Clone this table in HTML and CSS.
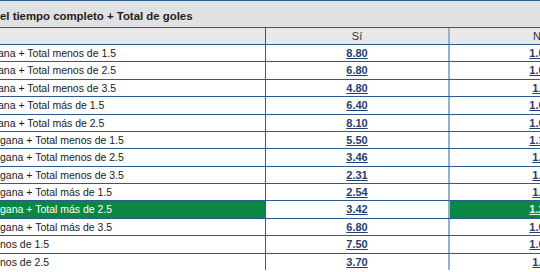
FILE: index.html
```html
<!DOCTYPE html>
<html>
<head>
<meta charset="utf-8">
<link rel="stylesheet" href="styles.css">
</head>
<body>
<div class="market">
  <div class="title">el tiempo completo + Total de goles</div>
  <div class="row head">
    <div class="c name"></div>
    <div class="c odd">Sí</div>
    <div class="c odd last">No</div>
  </div>
  <div class="row"><div class="c name a">ana + Total menos de 1.5</div><div class="c odd"><a>8.80</a></div><div class="c odd last"><a>1.01</a></div></div>
  <div class="row"><div class="c name a">ana + Total menos de 2.5</div><div class="c odd"><a>6.80</a></div><div class="c odd last"><a>1.05</a></div></div>
  <div class="row"><div class="c name a">ana + Total menos de 3.5</div><div class="c odd"><a>4.80</a></div><div class="c odd last"><a>1.1</a></div></div>
  <div class="row"><div class="c name a">ana + Total más de 1.5</div><div class="c odd"><a>6.40</a></div><div class="c odd last"><a>1.05</a></div></div>
  <div class="row"><div class="c name a">ana + Total más de 2.5</div><div class="c odd"><a>8.10</a></div><div class="c odd last"><a>1.02</a></div></div>
  <div class="row"><div class="c name">gana + Total menos de 1.5</div><div class="c odd"><a>5.50</a></div><div class="c odd last"><a>1.12</a></div></div>
  <div class="row"><div class="c name">gana + Total menos de 2.5</div><div class="c odd"><a>3.46</a></div><div class="c odd last"><a>1.2</a></div></div>
  <div class="row"><div class="c name">gana + Total menos de 3.5</div><div class="c odd"><a>2.31</a></div><div class="c odd last"><a>1.4</a></div></div>
  <div class="row"><div class="c name">gana + Total más de 1.5</div><div class="c odd"><a>2.54</a></div><div class="c odd last"><a>1.4</a></div></div>
  <div class="row sel"><div class="c name on">gana + Total más de 2.5</div><div class="c odd"><a>3.42</a></div><div class="c odd last on"><a>1.25</a></div></div>
  <div class="row"><div class="c name">gana + Total más de 3.5</div><div class="c odd"><a>6.80</a></div><div class="c odd last"><a>1.05</a></div></div>
  <div class="row"><div class="c name">nos de 1.5</div><div class="c odd"><a>7.50</a></div><div class="c odd last"><a>1.05</a></div></div>
  <div class="row"><div class="c name">nos de 2.5</div><div class="c odd"><a>3.70</a></div><div class="c odd last"><a>1.2</a></div></div>
</div>
</body>
</html>
```
FILE: styles.css
```css
html, body {
  margin: 0;
  padding: 0;
  background: #ffffff;
  overflow: hidden;
}
body {
  width: 540px;
  height: 272px;
  font-family: "Liberation Sans", Arial, sans-serif;
  color: #1a1a1a;
}
.market {
  width: 630px;
}
.title {
  height: 23px;
  padding-top: 3px;
  border-top: 1px solid #2c5a91;
  background: #e1e1e1;
  font-size: 11.4px;
  font-weight: bold;
  line-height: 24px;
  color: #1e1e1e;
}
.row {
  display: grid;
  grid-template-columns: 266px 184px 180px;
  height: 17.38px;
  box-sizing: border-box;
  border-top: 1px solid #2c5a91;
}
.row.head {
  height: 17px;
  background: #e8e8e8;
}
.c {
  font-size: 11px;
  line-height: 16px;
  box-sizing: border-box;
  border-right: 1px solid #2c5a91;
  white-space: nowrap;
  overflow: hidden;
}
.name {
  font-size: 10.5px;
}
.name.a {
  text-indent: -2px;
}
.odd {
  text-align: center;
  border-right: 2px solid #98afcd;
}
.odd.last {
  border-right: none;
}
.head .c {
  color: #333333;
}
.odd a {
  color: #243f6e;
  text-decoration: underline;
  font-weight: bold;
}
.on {
  background: #0a8745;
  color: #ffffff;
}
.on a {
  color: #e6f2ea;
}
```
